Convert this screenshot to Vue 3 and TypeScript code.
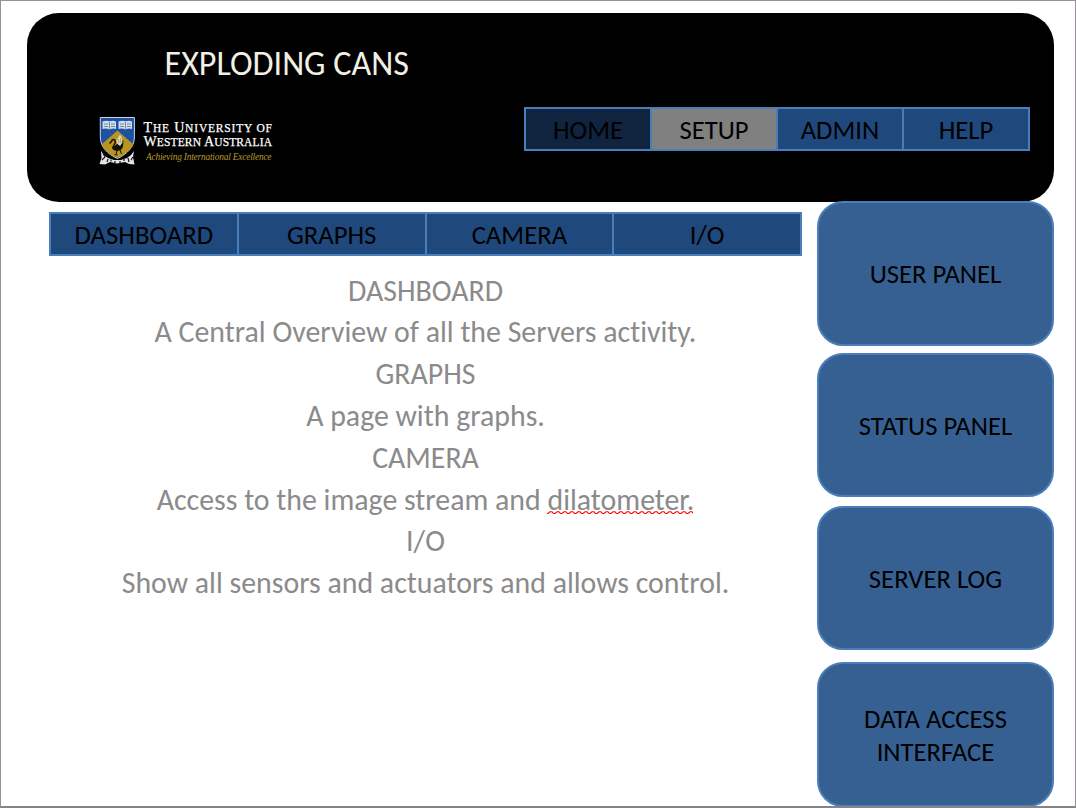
<script setup lang="ts">
interface Item {
  label: string
  state?: string
}

const primary: Item[] = [
  { label: 'HOME', state: 'home' },
  { label: 'SETUP', state: 'setup' },
  { label: 'ADMIN', state: 'admin' },
  { label: 'HELP', state: 'help' },
]

const tabs: Item[] = [
  { label: 'DASHBOARD', state: 'dash' },
  { label: 'GRAPHS', state: 'graphs' },
  { label: 'CAMERA', state: 'camera' },
  { label: 'I/O', state: 'io' },
]

const panels: Item[] = [
  { label: 'USER PANEL', state: 'user' },
  { label: 'STATUS PANEL', state: 'status' },
  { label: 'SERVER LOG', state: 'log' },
  { label: 'DATA ACCESS INTERFACE', state: 'data' },
]
</script>

<template>
  <div class="slide">
    <header class="banner">
      <div class="brand">
        <h1 class="title">EXPLODING CANS</h1>
        <svg class="logo" width="184" height="56" viewBox="96 113 184 56">
          <path d="M101 151L104 155L108 158L114 160L121 160L127 158L131 155L134 151L133 157L134.500 164.500L129 164L125 162L117 163.500L110 162L105 164.500L99.500 164L101.500 158Z" fill="#e2e3e4" />
          <path d="M103 153l2 4-3 3M107 162l1-3M111 159.500v2M115 161v2M120 161v2M124 159v2M128 158l1 4M131 160l2-3" fill="none" stroke="#15171a" stroke-width="1.200" />
          <path d="M100.300 117.500H134.400V137C134.400 147 127 154 117.400 158.500C107.500 154 100.300 147 100.300 137Z" fill="#1d51a4" stroke="#c9d5e4" stroke-width="1" />
          <path d="M117.400 130.500L133.500 144.500C130 151 124 155 117.400 158C110.500 155 105 151 101.500 144.500Z" fill="#b9941f" />
          <path d="M102.500 121.500Q106 120 109.500 121.200Q113 120 116 121.500V129Q113 128 109.500 129.500Q106 128 102.500 129ZM118.500 121.500Q122 120 125.500 121.200Q129 120 132 121.500V129Q129 128 125.500 129.500Q122 128 118.500 129Z" fill="#d3dce6" />
          <path d="M109.500 122v7M125.500 122v7M104 124h4M111 124h4M104 126.500h4M111 126.500h4M120 124h4M127 124h4M120 126.500h4M127 126.500h4" fill="none" stroke="#6481a5" stroke-width=".9" />
          <path d="M113.500 149C112 146 115.500 145 115.200 141.500C115 138.500 111.700 139 111.500 141.500L109.500 143.500" fill="none" stroke="#15110a" stroke-width="1.500" />
          <path d="M112 146.500C115 147 116 144 119 143L123.500 140L123 146.500Q122 150.500 117 151Q112 150.500 112 146.500Z" fill="#15110a" />
          <path d="M117.500 144L116.500 140.500L118 138L120 134.500L122 138L122.500 142.500L120 146Z" fill="#e1d9bd" />
          <path d="M118.200 139l.8 4M120.800 138v5" stroke="#8d7b50" stroke-width=".7" />
          <path d="M117 150.500l-1 4M120 150l1.500 4M114.500 154.800h3" fill="none" stroke="#15110a" stroke-width="1" />
          <g class="crest-name">
            <text x="143.500" y="132.300" textLength="128.500" lengthAdjust="spacing">T<tspan class="small">HE</tspan> U<tspan class="small">NIVERSITY OF</tspan></text>
            <text x="143.500" y="146.300" textLength="128.500" lengthAdjust="spacing">W<tspan class="small">ESTERN</tspan> A<tspan class="small">USTRALIA</tspan></text>
          </g>
          <text class="motto" x="146" y="160.300" textLength="125.500" lengthAdjust="spacing">Achieving International Excellence</text>
        </svg>
      </div>
      <nav class="bar primary">
        <a v-for="item in primary" :key="item.label" :class="['cell', item.state]"><span>{{ item.label }}</span></a>
      </nav>
    </header>
    <div class="body">
      <main class="content">
        <nav class="bar tabs">
          <a v-for="item in tabs" :key="item.label" :class="['cell', item.state]"><span>{{ item.label }}</span></a>
        </nav>
        <div class="copy">
          <p>DASHBOARD</p>
          <p>A Central Overview of all the Servers activity.</p>
          <p>GRAPHS</p>
          <p>A page with graphs.</p>
          <p>CAMERA</p>
          <p>Access to the image stream and <span class="misspelt">dilatometer.<svg class="squiggle" width="146" height="4" viewBox="0 0 146 4"><defs><pattern id="wave" width="7" height="4" patternUnits="userSpaceOnUse"><path d="M-.5 2.500H1L3 .8H5L6.500 2.500H7.500" fill="none" stroke="#ff0000" stroke-width="1.100" /></pattern></defs><rect width="146" height="4" fill="url(#wave)" /></svg></span></p>
          <p>I/O</p>
          <p>Show all sensors and actuators and allows control.</p>
        </div>
      </main>
      <aside class="side">
        <section v-for="panel in panels" :key="panel.label" :class="['panel', panel.state]"><span>{{ panel.label }}</span></section>
      </aside>
    </div>
  </div>
</template>

<style>
html,
body {
  margin: 0;
  overflow: hidden;
  background: #fff;
}
</style>

<style scoped>
.slide {
  box-sizing: border-box;
  width: 1076px;
  height: 808px;
  padding: 12px 21px 0 26px;
  border: 1px solid #949297;
  border-bottom: 2px solid #858585;
  background: #fff;
  font-family: Carlito, Lato, "Liberation Sans", sans-serif;
  font-variant-ligatures: none;
  overflow: hidden;
}
.banner {
  box-sizing: border-box;
  display: flex;
  justify-content: space-between;
  width: 1027px;
  height: 188.500px;
  padding-right: 24px;
  border-radius: 32px;
  background: #000;
}
.brand {
  display: flex;
  flex-direction: column;
  padding: 31px 0 0 69px;
}
.title {
  margin: 0 0 29px 68.500px;
  height: 40px;
  line-height: 40px;
  font-size: 34.100px;
  font-weight: 400;
  color: #f2efe4;
  white-space: nowrap;
}
.logo {
  display: block;
}
.crest-name {
  fill: #fff;
  stroke: #fff;
  stroke-width: .25px;
  font-family: "Liberation Serif", serif;
  font-size: 14px;
}
.small {
  font-size: 11.500px;
}
.motto {
  fill: #b89a2c;
  font-family: "Liberation Serif", serif;
  font-style: italic;
  font-size: 9.300px;
}
.bar {
  box-sizing: border-box;
  display: flex;
  height: 44px;
  border: 2px solid #4a7ebb;
}
.primary {
  width: 506px;
  margin-top: 94px;
}
.tabs {
  width: 753px;
}
.cell {
  box-sizing: border-box;
  flex: 1 1 0;
  display: flex;
  justify-content: center;
  align-items: center;
  padding-top: 2px;
  background: #1f497d;
  color: #000;
  font-size: 26.700px;
  line-height: 38px;
}
.cell + .cell {
  border-left: 2px solid #4a7ebb;
}
.home {
  background: #10243f;
}
.setup {
  background: #808080;
}
.body {
  display: flex;
  justify-content: space-between;
  width: 1027px;
}
.content {
  width: 753px;
  padding: 10.500px 0 0 22px;
}
.copy {
  padding-top: 14.600px;
  text-align: center;
  color: #8b8b8b;
  font-size: 29.850px;
}
.copy p {
  margin: 0;
  height: 41.800px;
  line-height: 41.800px;
  white-space: nowrap;
}
.misspelt {
  position: relative;
}
.squiggle {
  position: absolute;
  left: 0;
  bottom: 3px;
}
.side {
  width: 237px;
  margin-top: -.5px;
}
.panel {
  box-sizing: border-box;
  display: flex;
  justify-content: center;
  align-items: center;
  height: 144.500px;
  padding: 3px 36px 0;
  border: 2px solid #4a7ebb;
  border-radius: 26px;
  background: #366092;
  color: #000;
  font-size: 26.700px;
  line-height: 33px;
  text-align: center;
}
.status {
  margin-top: 7px;
}
.log {
  margin-top: 8.500px;
}
.data {
  margin-top: 12px;
}
</style>
